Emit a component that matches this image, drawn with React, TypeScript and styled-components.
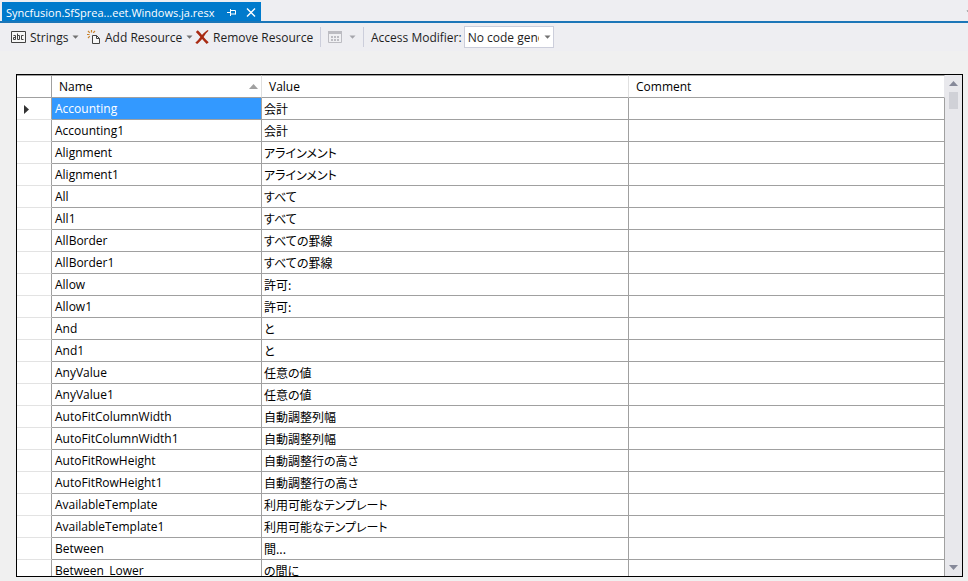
import React, { useState } from 'react';
import styled, { createGlobalStyle, css } from 'styled-components';

const GlobalStyle = createGlobalStyle`
  *, *::before, *::after { box-sizing: border-box; }
  body {
    margin: 0;
    background: #f0f0f0;
    color: #1e1e1e;
    font: 12px/16px "Open Sans", "Noto Sans", "Noto Sans CJK JP", sans-serif;
  }
  button, select { font: inherit; color: inherit; }
`;

const Page = styled.div`
  display: flex;
  flex-direction: column;
  height: 100vh;
  overflow: hidden;
`;

const TabStrip = styled.header`
  display: flex;
  flex: none;
  align-items: flex-end;
  justify-content: space-between;
  height: 23px;
  padding: 2px 0 0 2px;
  background: #eeeef2;
  border-bottom: 2px solid #1c76b8;
  overflow: hidden;
`;

const Tab = styled.div`
  display: flex;
  align-items: center;
  height: 19px;
  width: 259px;
  padding: 2px 1px 0 4px;
  background: #007acc;
  color: #fff;
`;

const TabTitle = styled.span`
  flex: 1;
  font-size: 11px;
  white-space: nowrap;
`;

const IconButton = styled.button`
  display: flex;
  flex: none;
  align-items: center;
  justify-content: center;
  width: 19px;
  height: 18px;
  padding: 0;
  border: 0;
  background: none;
`;

const TabOverflow = styled(IconButton)`
  align-self: center;
  justify-content: flex-start;
  width: 2px;
  height: 12px;
  overflow: hidden;
`;

const Toolbar = styled.div`
  display: flex;
  flex: none;
  align-items: center;
  height: 28px;
  padding: 0 9px;
  background: #eeeef2;
  white-space: nowrap;
`;

const ToolButton = styled.button<{ $width: number }>`
  display: flex;
  flex: none;
  align-items: center;
  gap: 4px;
  width: ${(p) => p.$width}px;
  height: 24px;
  padding: 0 2px;
  border: 0;
  background: none;
`;

const ToolText = styled.span`
  flex: 1;
  padding-top: 1px;
  text-align: left;
`;

const Separator = styled.span`
  flex: none;
  width: 1px;
  height: 20px;
  background: #cccedb;
`;

const AccessLabel = styled.label`
  margin: 0 2px 0 7px;
  padding-top: 1px;
`;

const SelectBox = styled.span`
  position: relative;
  display: flex;
  width: 90px;
  height: 22px;
`;

const Select = styled.select`
  appearance: none;
  width: 100%;
  padding: 1px 14px 0 3px;
  border: 1px solid #cccedb;
  border-radius: 0;
  background: #fff;
`;

const SelectArrow = styled.span`
  position: absolute;
  top: 0;
  right: 3px;
  display: flex;
  align-items: center;
  height: 100%;
  pointer-events: none;
`;

const GridFrame = styled.main`
  display: flex;
  flex: 1;
  min-height: 0;
  margin: 23px 5px 4px 16px;
  border: 1px solid #000;
  background: #fff;
`;

const Viewport = styled.div`
  flex: 1;
  min-width: 0;
  overflow: hidden;
`;

const Table = styled.table`
  width: 100%;
  table-layout: fixed;
  border-collapse: separate;
  border-spacing: 0;
`;

const cell = css`
  height: 22px;
  padding: 1px 3px 0;
  border: 0 solid #a0a0a0;
  border-width: 0 1px 1px 0;
  text-align: left;
  font-weight: 400;
  white-space: nowrap;
  overflow: hidden;
  color: #000;
`;

const HeadCell = styled.th`
  ${cell}
  height: 23px;
  padding: 0 3px 0 7px;
  border-top: 1px solid #a0a0a0;
  border-right-color: #e0e0e0;
`;

const CornerCell = styled(HeadCell)`
  border-right-color: #a0a0a0;
`;

const LastHeadCell = styled(HeadCell)`
  border-right-color: #e8e8ec;
`;

const SortHeading = styled.div`
  display: flex;
  align-items: center;
  justify-content: space-between;
`;

const RowHeader = styled.th`
  ${cell}
  padding: 1px 7px 0;
  border-bottom-color: #e3e3e3;
`;

const NameCell = styled.td<{ $selected: boolean }>`
  ${cell}
  ${(p) => p.$selected && 'background: #3399ff; color: #fff;'}
`;

const TextCell = styled.td`
  ${cell}
  padding: 0 2px;
  font-family: "Noto Sans CJK JP", sans-serif;
  font-feature-settings: "palt";
`;

const ScrollBar = styled.div`
  display: flex;
  flex: none;
  flex-direction: column;
  align-items: center;
  width: 17px;
  background: #e8e8ec;
`;

const ScrollButton = styled(IconButton)`
  width: 17px;
  height: 17px;
`;

const ScrollTrack = styled.div`
  flex: 1;
  width: 9px;
`;

const ScrollThumb = styled.div`
  height: 17px;
  background: #d0d1d7;
`;

const Glyph = styled.svg`
  display: block;
  flex: none;
`;

const Arrow = ({ color = '#717171' }: { color?: string }) => (
  <Glyph width="7" height="4" viewBox="0 0 7 4" aria-hidden="true">
    <path d="M0.5 0.5h6L3.5 3.7z" fill={color} />
  </Glyph>
);

const PinIcon = () => (
  <Glyph width="9" height="9" viewBox="0 0 9 9" fill="none" stroke="#fff" aria-hidden="true">
    <path d="M0 4.5h3M3.5 1v7M4 2.5h4.5v4M4 6h4.5" />
  </Glyph>
);

const CloseIcon = () => (
  <Glyph width="10" height="9" viewBox="0 0 10 9" fill="none" stroke="#fff" strokeWidth="1.4" aria-hidden="true">
    <path d="M1 0.5l8 8M9 0.5l-8 8" />
  </Glyph>
);

const StringsIcon = () => (
  <Glyph width="15" height="12" viewBox="0 0 15 12" fill="none" stroke="#424242" aria-hidden="true">
    <path d="M0.5 0.5h14v11h-14z" fill="#f6f6f6" />
    <path d="M2.5 4.5h2v4h-2v-2h2M6.5 2.5v6h2v-4h-2M12.5 4.5h-2v4h2" />
  </Glyph>
);

const AddIcon = () => (
  <Glyph width="14" height="14" viewBox="0 0 14 14" fill="none" aria-hidden="true">
    <path d="M5.5 5.5h4l3 3v5h-7zM9.5 5.5v3h3" fill="#f6f6f6" stroke="#424242" />
    <path d="M4.5 0v2.5M1 1l1.8 1.8M8 1L6.2 2.800M0 4.5h2.5M1 8l1.8-1.8" stroke="#c8822c" strokeWidth="1.2" />
  </Glyph>
);

const RemoveIcon = () => (
  <Glyph width="14" height="14" viewBox="0 0 14 14" aria-hidden="true">
    <path d="M0.800 1.900L2.800 0.300C4.300 1.700 5.700 3.300 7 5.100C8.800 2.900 10.600 1.300 12.800 0L13.500 0.800C11.700 2.600 10 4.600 8.600 6.900C10.200 8.900 11.800 10.600 13.700 12.200L11.700 14C10 12.500 8.500 10.900 7.100 9.100C5.700 10.900 4.200 12.600 2.200 14L0.300 12.800C2.300 11.200 4 9.300 5.400 7.100C4 5.300 2.500 3.500 0.800 1.900z" fill="#a82a12" />
  </Glyph>
);

const TableIcon = () => (
  <Glyph width="14" height="12" viewBox="0 0 14 12" aria-hidden="true">
    <path d="M0.5 0.5h13v11h-13z" fill="#f0f0f3" stroke="#bcbcc2" />
    <path d="M0 0h14v3H0z" fill="#bcbcc2" />
    <path d="M3 5h2v2H3zM6 5h2v2H6zM9 5h2v2H9zM3 8h2v2H3zM6 8h2v2H6zM9 8h2v2H9z" fill="#bcbcc2" />
  </Glyph>
);

const entries: [string, string][] = [
  ['Accounting', '会計'],
  ['Accounting1', '会計'],
  ['Alignment', 'アラインメント'],
  ['Alignment1', 'アラインメント'],
  ['All', 'すべて'],
  ['All1', 'すべて'],
  ['AllBorder', 'すべての罫線'],
  ['AllBorder1', 'すべての罫線'],
  ['Allow', '許可:'],
  ['Allow1', '許可:'],
  ['And', 'と'],
  ['And1', 'と'],
  ['AnyValue', '任意の値'],
  ['AnyValue1', '任意の値'],
  ['AutoFitColumnWidth', '自動調整列幅'],
  ['AutoFitColumnWidth1', '自動調整列幅'],
  ['AutoFitRowHeight', '自動調整行の高さ'],
  ['AutoFitRowHeight1', '自動調整行の高さ'],
  ['AvailableTemplate', '利用可能なテンプレート'],
  ['AvailableTemplate1', '利用可能なテンプレート'],
  ['Between', '間...'],
  ['Between_Lower', 'の間に'],
];

export default function App() {
  const [selected, setSelected] = useState(0);

  return (
    <Page>
      <GlobalStyle />
      <TabStrip>
        <Tab>
          <TabTitle>Syncfusion.SfSprea...eet.Windows.ja.resx</TabTitle>
          <IconButton aria-label="Pin tab"><PinIcon /></IconButton>
          <IconButton aria-label="Close tab"><CloseIcon /></IconButton>
        </Tab>
        <TabOverflow aria-label="More tabs"><Arrow /></TabOverflow>
      </TabStrip>

      <Toolbar role="toolbar">
        <ToolButton $width={71}><StringsIcon /><ToolText>Strings</ToolText><Arrow /></ToolButton>
        <Spacer />
        <ToolButton $width={108}><AddIcon /><ToolText>Add Resource</ToolText><Arrow /></ToolButton>
        <ToolButton $width={127}><RemoveIcon /><ToolText>Remove Resource</ToolText></ToolButton>
        <Separator />
        <ToolButton $width={42} disabled aria-label="View">
          <ViewIcon><TableIcon /></ViewIcon><Arrow color="#a5a5ab" />
        </ToolButton>
        <Separator />
        <AccessLabel htmlFor="access">Access Modifier:</AccessLabel>
        <SelectBox>
          <Select id="access" defaultValue="none">
            <option value="none">No code generation</option>
            <option value="internal">Internal</option>
            <option value="public">Public</option>
          </Select>
          <SelectArrow><Arrow /></SelectArrow>
        </SelectBox>
      </Toolbar>

      <GridFrame>
        <Viewport>
          <Table>
            <colgroup>
              <col width="35" />
              <col width="210" />
              <col width="367" />
              <col />
            </colgroup>
            <thead>
              <tr>
                <CornerCell aria-label="Row" />
                <HeadCell scope="col" aria-sort="ascending">
                  <SortHeading>
                    Name
                    <Glyph width="9" height="5" viewBox="0 0 9 5" aria-hidden="true">
                      <path d="M4.5 0L9 5H0z" fill="#a0a0a0" />
                    </Glyph>
                  </SortHeading>
                </HeadCell>
                <HeadCell scope="col">Value</HeadCell>
                <LastHeadCell scope="col">Comment</LastHeadCell>
              </tr>
            </thead>
            <tbody>
              {entries.map(([name, value], i) => (
                <tr key={name} onClick={() => setSelected(i)}>
                  <RowHeader scope="row" aria-label={name}>
                    {i === selected && (
                      <Glyph width="5" height="9" viewBox="0 0 5 9" aria-hidden="true">
                        <path d="M0 0l5 4.5L0 9z" fill="#333" />
                      </Glyph>
                    )}
                  </RowHeader>
                  <NameCell $selected={i === selected}>{name}</NameCell>
                  <TextCell lang="ja">{value}</TextCell>
                  <TextCell />
                </tr>
              ))}
            </tbody>
          </Table>
        </Viewport>
        <ScrollBar>
          <ScrollButton aria-label="Scroll up">
            <Glyph width="9" height="5" viewBox="0 0 9 5" aria-hidden="true">
              <path d="M4.5 0L9 5H0z" fill="#868999" />
            </Glyph>
          </ScrollButton>
          <ScrollTrack><ScrollThumb /></ScrollTrack>
          <ScrollButton aria-label="Scroll down">
            <Glyph width="9" height="5" viewBox="0 0 9 5" aria-hidden="true">
              <path d="M0 0h9L4.5 5z" fill="#868999" />
            </Glyph>
          </ScrollButton>
        </ScrollBar>
      </GridFrame>
    </Page>
  );
}

const Spacer = styled.span`
  flex: none;
  width: 5px;
`;

const ViewIcon = styled.span`
  padding: 0 3px 0 5px;
`;
